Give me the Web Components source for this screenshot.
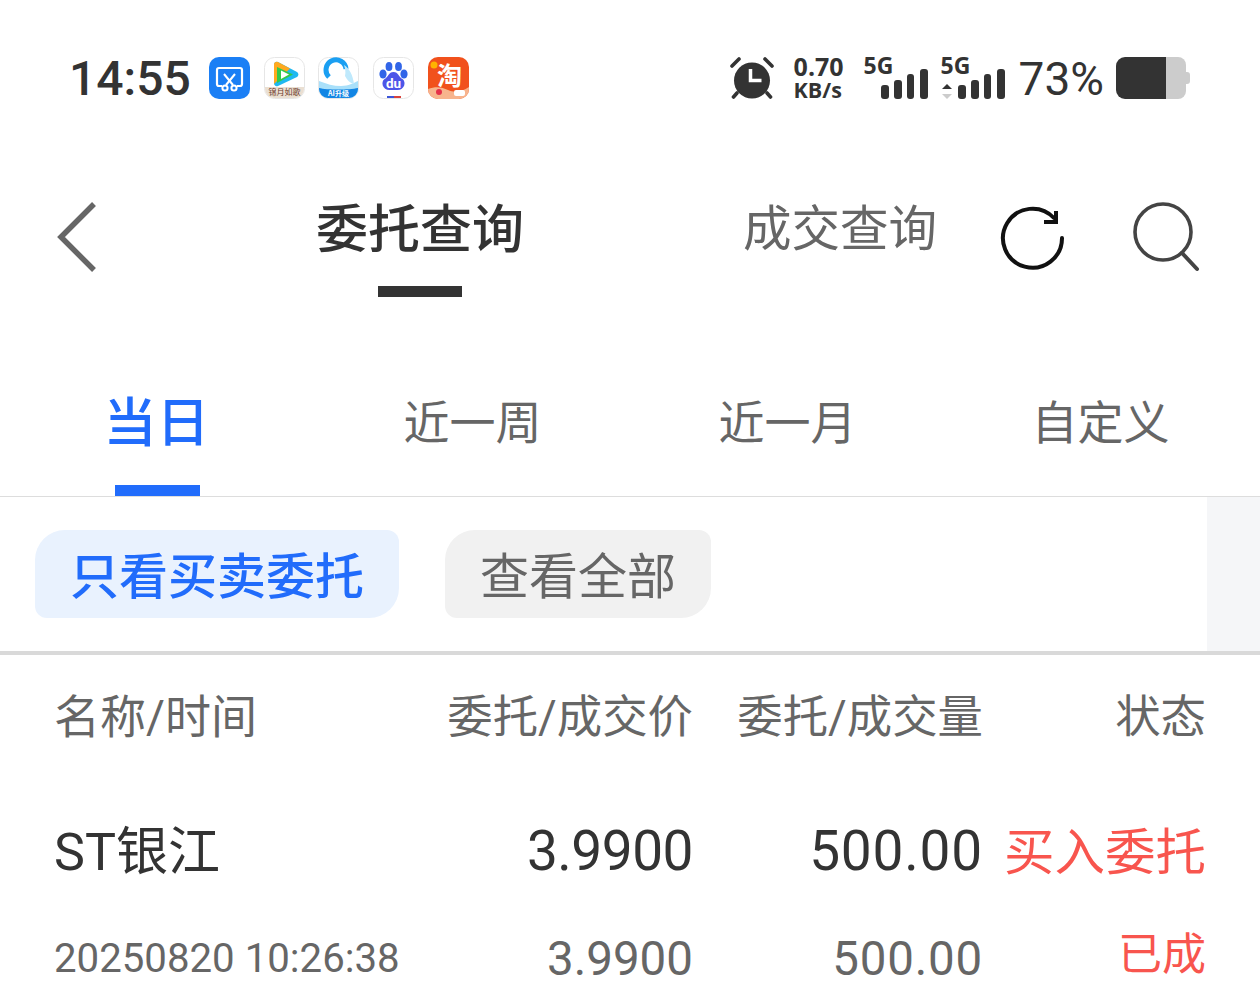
<!DOCTYPE html>
<html lang="zh">
<head>
<meta charset="UTF-8">
<title>委托查询</title>
<style>
  html, body { margin: 0; height: 997px; overflow: hidden; background: #fff; }
  body { font-family: Roboto, "Noto Sans CJK SC", sans-serif; color: #333; }
</style>
</head>
<body>

<status-bar></status-bar>
<nav-bar></nav-bar>
<period-tabs></period-tabs>
<filter-chips></filter-chips>
<order-table>
  <order-row class="head">
    <span slot="name">名称/时间</span><span slot="price">委托/成交价</span><span slot="qty">委托/成交量</span><span slot="status">状态</span>
  </order-row>
  <order-row class="big">
    <span slot="name">ST银江</span><span slot="price">3.9900</span><span slot="qty">500.00</span><span slot="status">买入委托</span>
  </order-row>
  <order-row class="small">
    <span slot="name">20250820 10:26:38</span><span slot="price">3.9900</span><span slot="qty">500.00</span><span slot="status">已成</span>
  </order-row>
</order-table>

<script>
  customElements.define('status-bar', class extends HTMLElement {
    constructor() {
      super();
      this.attachShadow({mode: 'open'}).innerHTML = `
        <style>
          :host { display: flex; align-items: center; height: 156px; padding: 0 70px 0 69px; box-sizing: border-box; color: #333; }
          .time { font-size: 48px; font-weight: 500; line-height: 1; width: 140px; padding-top: 2px; }
          .apps { display: flex; gap: 13.7px; }
          svg { display: block; }
          .app { width: 41px; height: 42px; }
          .right { margin-left: auto; display: flex; align-items: center; }
          .speed { font-family: "Open Sans", sans-serif; font-weight: 700; margin: 0 19px 0 20px; width: 51px; white-space: nowrap; }
          .speed div { font-size: 25px; line-height: 22px; height: 22px; }
          .speed div:last-child { font-size: 21.500px; margin-top: 2px; }
          .pct { font-size: 46px; line-height: 1; font-family: Roboto, sans-serif; margin: 0 12px 0 14px; padding-top: 2px; }
        </style>
        <div class="time">14:55</div>
        <div class="apps">
          <svg class="app" viewBox="0 0 41 42">
            <rect width="41" height="42" rx="10" fill="#1b7ff5"/>
            <path d="M13 29H10a2 2 0 0 1-2-2V13a2 2 0 0 1 2-2h21a2 2 0 0 1 2 2v14a2 2 0 0 1-2 2h-3" fill="none" stroke="#fff" stroke-width="2.2"/>
            <path d="M15 17l9 11M26 17l-9 11" stroke="#fff" stroke-width="2" fill="none"/>
            <circle cx="16" cy="31" r="2.6" fill="none" stroke="#fff" stroke-width="2"/>
            <circle cx="25" cy="31" r="2.6" fill="none" stroke="#fff" stroke-width="2"/>
          </svg>
          <svg class="app" viewBox="0 0 41 42">
            <rect x=".5" y=".5" width="40" height="41" rx="10" fill="#fff" stroke="#e6e6e6"/>
            <path d="M10 7a3 3 0 0 1 4-2l19 10a3 3 0 0 1 0 5L14 29a3 3 0 0 1-4-2z" fill="#1fb8f0"/>
            <path d="M10 7a3 3 0 0 1 4-2l12 6.500L10 27z" fill="#ffa91f"/>
            <path d="M13 10l16 7.500L13 26z" fill="#34c94b"/>
            <path d="M17 13.500l8 4-8 4.500z" fill="#fff"/>
            <path d="M1 30h39v2a9 9 0 0 1-9 9H10a9 9 0 0 1-9-9z" fill="#eadfd2"/>
            <text x="20.5" y="38" font-size="8" text-anchor="middle" fill="#6d3a2b" font-family="Noto Sans CJK SC">锦月如歌</text>
          </svg>
          <svg class="app" viewBox="0 0 41 42">
            <rect x=".5" y=".5" width="40" height="41" rx="10" fill="#fff" stroke="#e6e6e6"/>
            <path d="M1 24c8 3 14 5 22 5s12-3 17-5v8a9 9 0 0 1-9 9H10a9 9 0 0 1-9-9z" fill="#a9e0fa"/>
            <path d="M1 31c8 2 30 2 39 0v1a9 9 0 0 1-9 9H10a9 9 0 0 1-9-9z" fill="#1285e4"/>
            <path d="M11 20a10 10 0 1 1 17-8" fill="none" stroke="#1a9ff2" stroke-width="5"/>
            <path d="M26 8c5 3 9 10 10 19-4-1-7-4-9-8 1-4 0-8-1-11z" fill="#bfe9fc"/>
            <text x="20.5" y="38.500" font-size="7" text-anchor="middle" fill="#fff" font-family="Noto Sans CJK SC" font-weight="700">AI升级</text>
          </svg>
          <svg class="app" viewBox="0 0 41 42">
            <rect x=".5" y=".5" width="40" height="41" rx="10" fill="#fff" stroke="#e6e6e6"/>
            <ellipse cx="10" cy="17" rx="3.6" ry="4.6" fill="#3165e8"/>
            <ellipse cx="16" cy="9.5" rx="3.4" ry="4.6" fill="#3165e8"/>
            <ellipse cx="25.5" cy="9.5" rx="3.4" ry="4.6" fill="#3165e8"/>
            <ellipse cx="31" cy="17" rx="3.6" ry="4.6" fill="#3165e8"/>
            <path d="M20.5 15c5 0 5 5 9 7 4 3 2 11-5 11h-8c-7 0-9-8-5-11 4-2 4-7 9-7z" fill="#4c55e8"/>
            <text x="20.5" y="30.5" font-size="13.5" text-anchor="middle" fill="#fff" font-family="Roboto" font-weight="700">du</text>
            <rect x="14" y="39" width="7" height="2" fill="#3b55d8"/><rect x="21" y="39" width="7" height="2" fill="#d8423b"/>
          </svg>
          <svg class="app" viewBox="0 0 41 42">
            <rect width="41" height="42" rx="10" fill="#f1511c"/>
            <path d="M0 32c8-3 14-2 20 1s14 2 21-3v2a10 10 0 0 1-10 10H10A10 10 0 0 1 0 32z" fill="#f7b48d"/>
            <text x="21.500" y="27.500" font-size="25" font-weight="700" text-anchor="middle" fill="#fff" font-family="Noto Sans CJK SC">淘</text>
            <circle cx="6" cy="8" r="3.500" fill="#ffb300"/>
            <circle cx="11" cy="35" r="3" fill="#e5304a"/>
            <rect x="26" y="33" width="11" height="6" rx="2" fill="#fff"/>
          </svg>
        </div>
        <div class="right">
          <svg width="44" height="42" viewBox="0 0 44 42">
            <circle cx="22" cy="23.500" r="18" fill="#333"/>
            <path d="M2 9l7-7M42 9l-7-7M7 36l-3.500 4M37 36l3.500 4" stroke="#333" stroke-width="3.600" stroke-linecap="round"/>
            <path d="M20.500 12v11.500h11" fill="none" stroke="#fff" stroke-width="3.500"/>
          </svg>
          <div class="speed"><div>0.70</div><div>KB/s</div></div>
          <signal-icon></signal-icon>
          <signal-icon arrows style="margin-left:13px"></signal-icon>
          <div class="pct">73%</div>
          <svg width="74" height="42" viewBox="0 0 74 42">
            <path d="M50 0H62a8 8 0 0 1 8 8v26a8 8 0 0 1-8 8H50z" fill="#ccc"/>
            <path d="M70 15h1a3 3 0 0 1 3 3v6a3 3 0 0 1-3 3h-1z" fill="#ccc"/>
            <path d="M9 0H50V42H9a9 9 0 0 1-9-9V9a9 9 0 0 1 9-9z" fill="#333"/>
          </svg>
        </div>`;
    }
  });

  customElements.define('signal-icon', class extends HTMLElement {
    connectedCallback() {
      const arrows = this.hasAttribute('arrows');
      this.attachShadow({mode: 'open'}).innerHTML = `
        <style>
          :host { display: block; width: 64px; height: 44px; position: relative; }
          svg { display: block; }
          span { position: absolute; left: 0; top: -3px; font: 700 23px/24px "Open Sans", sans-serif; color: #333; }
        </style>
        <svg width="64" height="44" viewBox="0 0 64 44" fill="#333">
          ${arrows ? '<path d="M6 28l5 5H1z"/><path d="M6 43l5-5H1z" fill="#ccc"/>' : ''}
          <rect x="17" y="29" width="8" height="14" rx="3"/>
          <rect x="30" y="24" width="8" height="19" rx="3"/>
          <rect x="43" y="18" width="7" height="25" rx="3"/>
          <rect x="56" y="13" width="8" height="30" rx="3"/>
        </svg>
        <span>5G</span>`;
    }
  });

  customElements.define('nav-bar', class extends HTMLElement {
    constructor() {
      super();
      this.attachShadow({mode: 'open'}).innerHTML = `
        <style>
          :host { display: flex; align-items: flex-start; height: 194px; padding-left: 57px; box-sizing: border-box; }
          svg { display: block; }
          .title { width: 208px; margin-left: 217px; display: flex; flex-direction: column; align-items: center; }
          .title span { font: 500 52px/70px "Noto Sans CJK SC", sans-serif; color: #333; white-space: nowrap; margin-top: 35px; }
          .title i { display: block; width: 84px; height: 11px; background: #333; margin-top: 25px; }
          .other { font: 400 48.500px/70px "Noto Sans CJK SC", sans-serif; color: #666; margin: 34px 0 0 219px; white-space: nowrap; }
        </style>
        <svg width="42" height="70" viewBox="0 0 42 70" style="margin-top:46px">
          <path d="M37 2L4 35l33 33" fill="none" stroke="#666" stroke-width="5.500"/>
        </svg>
        <div class="title"><span>委托查询</span><i></i></div>
        <div class="other">成交查询</div>
        <svg width="68" height="68" viewBox="0 0 68 68" style="margin:48px 0 0 62px">
          <path d="M63 34A29.500 29.500 0 1 1 55 14" fill="none" stroke="#111" stroke-width="4" stroke-linecap="round"/>
          <path d="M57 7v11H45" fill="none" stroke="#111" stroke-width="4"/>
        </svg>
        <svg width="70" height="72" viewBox="0 0 70 72" style="margin:44px 0 0 65px">
          <circle cx="31" cy="32" r="28" fill="none" stroke="#444" stroke-width="3.600"/>
          <path d="M50 53l15 16" stroke="#444" stroke-width="4" stroke-linecap="round"/>
        </svg>`;
    }
  });

  customElements.define('period-tabs', class extends HTMLElement {
    constructor() {
      super();
      const items = ['当日', '近一周', '近一月', '自定义'];
      this.attachShadow({mode: 'open'}).innerHTML = `
        <style>
          :host { display: grid; grid-template-columns: repeat(4, 1fr); height: 146px; border-bottom: 1px solid #ddd; font-family: "Noto Sans CJK SC", sans-serif; }
          div { position: relative; text-align: center; color: #666; font-size: 46px; line-height: 64px; padding-top: 37px; }
          div:last-child { padding-right: 4px; }
          .on { color: #216cfb; font-size: 53px; font-weight: 500; padding-right: 2px; }
          .on::after { content: ""; position: absolute; left: 115px; bottom: 0; width: 85px; height: 11px; background: #216cfb; }
        </style>
        ${items.map((t, i) => `<div class="${i ? '' : 'on'}">${t}</div>`).join('')}`;
    }
  });

  customElements.define('filter-chips', class extends HTMLElement {
    constructor() {
      super();
      this.attachShadow({mode: 'open'}).innerHTML = `
        <style>
          :host { display: flex; height: 154px; border-bottom: 4px solid #d9d9d9; font-family: "Noto Sans CJK SC", sans-serif; }
          .list { flex: 1; display: flex; gap: 46px; padding: 33px 0 0 35px; align-items: flex-start; }
          .chip { height: 88px; line-height: 86px; padding: 0 35px; font-size: 49px; border-radius: 30px 12px 30px 12px; white-space: nowrap; }
          .on { background: #e9f2fe; color: #216cfb; font-weight: 500; }
          .off { background: #f1f1f1; color: #666; }
          .side { width: 53px; background: #f5f6f8; }
        </style>
        <div class="list"><div class="chip on">只看买卖委托</div><div class="chip off">查看全部</div></div>
        <div class="side"></div>`;
    }
  });

  customElements.define('order-table', class extends HTMLElement {
    constructor() {
      super();
      this.attachShadow({mode: 'open'}).innerHTML = `
        <style>
          :host { display: block; padding: 28px 54px 0 54px; }
        </style>
        <slot></slot>`;
    }
  });

  customElements.define('order-row', class extends HTMLElement {
    constructor() {
      super();
      this.attachShadow({mode: 'open'}).innerHTML = `
        <style>
          :host { display: grid; grid-template-columns: 349px 290px 290px 223px; align-items: baseline; white-space: nowrap; color: #333; }
          :host(.head) { height: 68px; font-size: 45.400px; line-height: 68px; color: #666; margin-bottom: 66px; }
          :host(.big) { height: 68px; font-size: 55px; line-height: 68px; margin-bottom: 40px; }
          :host(.small) { height: 68px; font-size: 47.500px; line-height: 68px; color: #666; }
          .r { text-align: right; }
          .p { letter-spacing: -.5px; }
          .q { letter-spacing: .8px; }
          :host(.head) .p, :host(.head) .q { letter-spacing: 0; }
          :host(.small) .p { letter-spacing: 0; }
          .s { color: #f8554e; }
          :host(.head) .s { color: #666; }
          :host(.head) .n { font-size: 46px; }
          :host(.big) .s { font-size: 50.500px; }
          :host(.big) .n { font-size: 52px; }
          :host(.small) .n { font-size: 40.200px; align-self: start; }
          :host(.small) .s { font-size: 44px; line-height: 60px; align-self: start; }
        </style>
        <div class="n"><slot name="name"></slot></div>
        <div class="r p"><slot name="price"></slot></div>
        <div class="r q"><slot name="qty"></slot></div>
        <div class="r s"><slot name="status"></slot></div>`;
    }
  });
</script>

</body>
</html>
